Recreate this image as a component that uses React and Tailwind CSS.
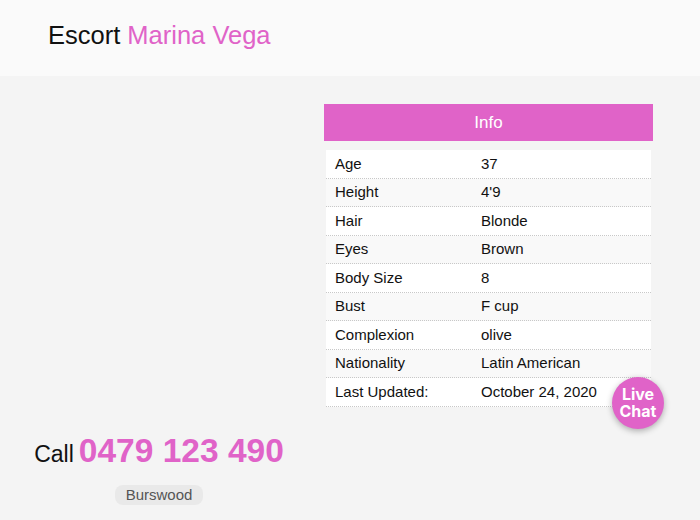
export default function App() {
  const rows = [
    ["Age", "37"],
    ["Height", "4'9"],
    ["Hair", "Blonde"],
    ["Eyes", "Brown"],
    ["Body Size", "8"],
    ["Bust", "F cup"],
    ["Complexion", "olive"],
    ["Nationality", "Latin American"],
    ["Last Updated:", "October 24, 2020"],
  ];
  return (
    <div className="relative w-[700px] h-[520px] overflow-hidden bg-[#f4f4f4] font-['Liberation_Sans',Arial,sans-serif] text-[#111]">
      <div className="h-[76px] bg-[#fafafa] pt-[20px] pl-[48px]">
        <h1 className="text-[25.5px] leading-[30px]">
          Escort <span className="text-[#e063c8]">Marina Vega</span>
        </h1>
      </div>
      <div className="flex pt-[28px]">
        <div className="w-[318px] flex flex-col items-center pt-[327px]">
          <div className="flex items-baseline gap-[5px] leading-[40px]">
            <span className="text-[23px]">Call</span>
            <span className="text-[33.5px] font-bold text-[#e063c8]">0479 123 490</span>
          </div>
          <div className="mt-[11px] h-[20px] px-[11px] rounded-[8px] bg-[#e9e9e9] text-[15px] leading-[20px] text-[#555]">
            Burswood
          </div>
        </div>
        <div className="ml-[6px] w-[329px]">
          <div className="h-[37px] bg-[#e063c8] text-white text-[17px] leading-[37px] text-center">
            Info
          </div>
          <div className="mt-[9px] mx-[2px]">
            {rows.map(([k, v], i) => (
              <div
                key={k}
                className={`flex h-[28.5px] items-center border-b border-dotted border-[#c8c8c8] text-[15px] ${i % 2 === 0 ? "bg-white" : "bg-[#f9f9f9]"}`}
              >
                <div className="w-[155px] pl-[9px]">{k}</div>
                <div>{v}</div>
              </div>
            ))}
          </div>
        </div>
      </div>
      <div className="absolute left-[612px] top-[377px] w-[52px] h-[52px] rounded-full bg-[#e063c8] shadow-[0_2px_6px_rgba(0,0,0,0.3)] flex flex-col items-center justify-center text-white font-['Inter',sans-serif] font-bold text-[16px] leading-[17px]">
        <span>Live</span>
        <span>Chat</span>
      </div>
    </div>
  );
}
